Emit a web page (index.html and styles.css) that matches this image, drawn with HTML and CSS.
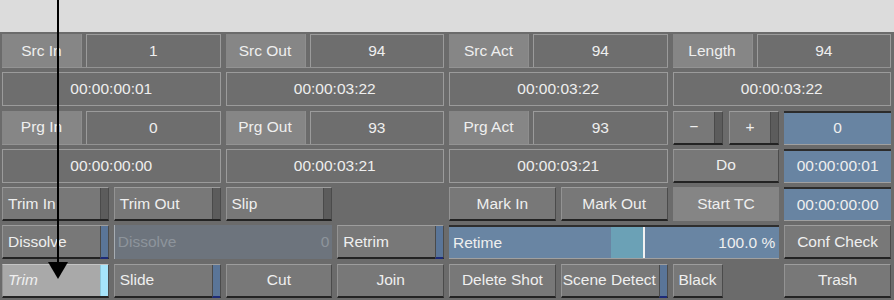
FILE: index.html
```html
<!DOCTYPE html>
<html lang="en">
<head>
  <meta charset="UTF-8">
  <title>Timeline Editing Panel</title>
  <link rel="stylesheet" href="styles.css">
</head>
<body>
  <div class="topbar"></div>
  <div class="panel">
    <div class="grid">
      <!-- source row -->
      <div class="pair"><div class="lbl">Src In</div><div class="val">1</div></div>
      <div class="pair"><div class="lbl">Src Out</div><div class="val">94</div></div>
      <div class="pair"><div class="lbl">Src Act</div><div class="val">94</div></div>
      <div class="pair"><div class="lbl">Length</div><div class="val">94</div></div>

      <div class="tc">00:00:00:01</div>
      <div class="tc">00:00:03:22</div>
      <div class="tc">00:00:03:22</div>
      <div class="tc">00:00:03:22</div>

      <!-- program row -->
      <div class="pair"><div class="lbl">Prg In</div><div class="val">0</div></div>
      <div class="pair"><div class="lbl">Prg Out</div><div class="val">93</div></div>
      <div class="pair"><div class="lbl">Prg Act</div><div class="val">93</div></div>
      <div class="split">
        <div class="btn has-ind center"><span class="face">&minus;</span><span class="ind"></span></div>
        <div class="btn has-ind center"><span class="face">+</span><span class="ind"></span></div>
      </div>
      <div class="blue">0</div>

      <div class="tc">00:00:00:00</div>
      <div class="tc">00:00:03:21</div>
      <div class="tc">00:00:03:21</div>
      <div class="btn center"><span class="face">Do</span></div>
      <div class="blue">00:00:00:01</div>

      <!-- edit buttons -->
      <div class="btn has-ind"><span class="face">Trim In</span><span class="ind"></span></div>
      <div class="btn has-ind"><span class="face">Trim Out</span><span class="ind"></span></div>
      <div class="btn has-ind"><span class="face">Slip</span><span class="ind"></span></div>
      <div class="gap"></div>
      <div class="btn center"><span class="face">Mark In</span></div>
      <div class="btn center"><span class="face">Mark Out</span></div>
      <div class="flat">Start TC</div>
      <div class="blue">00:00:00:00</div>

      <div class="btn has-ind"><span class="face">Dissolve</span><span class="ind on"></span></div>
      <div class="field"><span>Dissolve</span><span>0</span></div>
      <div class="btn has-ind"><span class="face">Retrim</span><span class="ind on"></span></div>
      <div class="slider">
        <span class="fill"></span>
        <span class="mark"></span>
        <span class="s-name">Retime</span>
        <span class="s-val">100.0 %</span>
      </div>
      <div class="btn center"><span class="face">Conf Check</span></div>

      <div class="btn has-ind active"><span class="face">Trim</span><span class="ind lit"></span></div>
      <div class="btn has-ind"><span class="face">Slide</span><span class="ind on"></span></div>
      <div class="btn center"><span class="face">Cut</span></div>
      <div class="btn center"><span class="face">Join</span></div>
      <div class="btn center"><span class="face">Delete Shot</span></div>
      <div class="btn has-ind tight"><span class="face">Scene Detect</span><span class="ind on"></span></div>
      <div class="split">
        <div class="btn"><span class="face">Black</span></div>
      </div>
      <div class="btn center"><span class="face">Trash</span></div>
    </div>

    <div class="pointer">
      <div class="stem"></div>
      <div class="head"></div>
    </div>
  </div>
</body>
</html>
```

FILE: styles.css
```css
body { margin: 0; width: 894px; height: 300px; overflow: hidden; font-family: "Liberation Sans", Arial, sans-serif; font-size: 15.5px; color: #efefef; background: #6b6b6b; }
.topbar { height: 32px; background: #dcdcdc; }
.panel { position: relative; height: 268px; background: #6b6b6b; }
.grid { display: grid; grid-template-columns: repeat(8, 1fr); grid-auto-rows: 34px; column-gap: 5px; row-gap: 4.3px; padding: 2px 3px 0 2px; }

.pair { grid-column: span 2; display: grid; grid-template-columns: 80px 1fr; column-gap: 4px; border-bottom: 1px solid #939393; }
.lbl { display: flex; align-items: center; justify-content: center; background: #868686; border-right: 1px solid #8e8e8e; }
.val { display: flex; align-items: center; justify-content: center; border: 1px solid #9b9b9b; border-bottom: 0; background: #6e6e6e; }
.tc { grid-column: span 2; display: flex; align-items: center; justify-content: center; border: 1px solid #9b9b9b; background: #6e6e6e; }

.split { display: grid; grid-template-columns: 1fr 1fr; column-gap: 6px; }
.gap { }

.btn { display: flex; background: #787878; border-top: 1px solid #9d9d9d; border-left: 1px solid #939393; border-right: 1px solid #4b4b4b; border-bottom: 2px solid #232323; }
.btn .face { flex: 1; display: flex; align-items: center; padding: 0 5px; white-space: nowrap; }
.btn.center .face { justify-content: center; }
.btn.tight .face { padding: 0 1px; }
.ind { width: 7px; background: #5c5c5c; border-left: 1px solid #4a4a4a; }
.ind.on { background: #5a7598; border-bottom: 2px solid #1c2a78; margin-bottom: -2px; }
.ind.lit { background: #a6e4fa; border-left-color: #8fc7da; }
.btn.active { background: #a9a9a9; border-top-color: #c4c4c4; }
.btn.active .face { font-style: italic; }

.flat { display: flex; align-items: center; justify-content: center; background: #858585; }

.blue { display: flex; align-items: center; justify-content: center; background: #6884a2; border-top: 2px solid #2c2c2c; border-bottom: 1px solid #a0a0a0; }

.field { grid-column: span 2; display: flex; align-items: center; justify-content: space-between; padding: 0 3px 0 3px; background: #6d747d; color: #8d949c; border-left: 1px solid #a6acb2; }

.slider { grid-column: span 3; position: relative; display: flex; align-items: center; justify-content: space-between; padding: 0 4px; background: #6985a3; border-top: 2px solid #2e2e2e; border-bottom: 1px solid #a0a0a0; }
.slider .fill { position: absolute; left: 162px; top: 0; bottom: 0; width: 32px; background: #6ba1b6; }
.slider .mark { position: absolute; left: 194px; top: 0; bottom: 0; width: 2px; background: #f2f2f2; }
.s-name, .s-val { position: relative; }

.pointer { position: absolute; left: 48px; top: -32px; width: 20px; height: 280px; }
.stem { position: absolute; left: 9px; top: 0; width: 2px; height: 262px; background: #000; }
.head { position: absolute; left: 0; top: 262px; width: 0; height: 0; border-left: 10px solid transparent; border-right: 10px solid transparent; border-top: 17px solid #000; }
```
